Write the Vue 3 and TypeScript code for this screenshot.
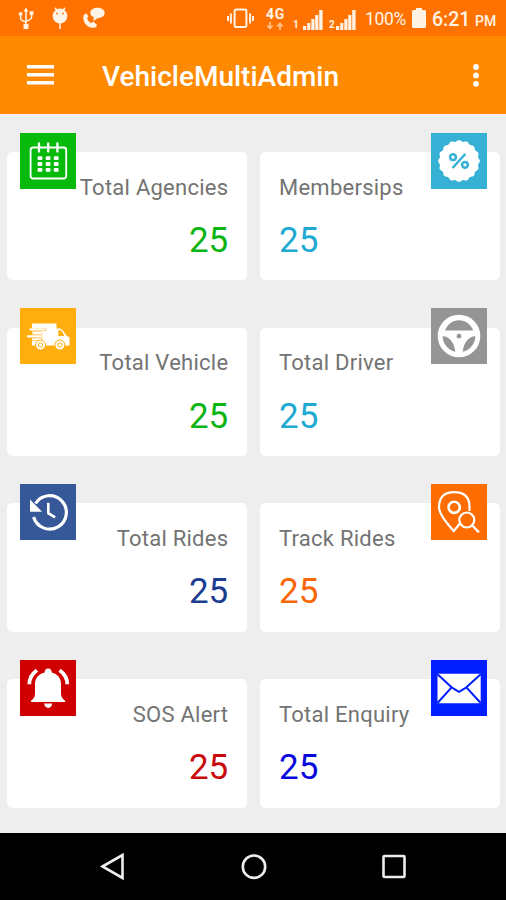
<script setup lang="ts">
type IconName = 'calendar' | 'percent' | 'truck' | 'wheel' | 'history' | 'track' | 'bell' | 'mail'

interface Tile {
  label: string
  value: number
  icon: IconName
  tone: string
}

const tiles: Tile[] = [
  { label: 'Total Agencies', value: 25, icon: 'calendar', tone: 'green' },
  { label: 'Membersips', value: 25, icon: 'percent', tone: 'cyan' },
  { label: 'Total Vehicle', value: 25, icon: 'truck', tone: 'amber' },
  { label: 'Total Driver', value: 25, icon: 'wheel', tone: 'grey' },
  { label: 'Total Rides', value: 25, icon: 'history', tone: 'navy' },
  { label: 'Track Rides', value: 25, icon: 'track', tone: 'orange' },
  { label: 'SOS Alert', value: 25, icon: 'bell', tone: 'red' },
  { label: 'Total Enquiry', value: 25, icon: 'mail', tone: 'blue' },
]

const calendarDots = [0, 1, 2].flatMap((row) =>
  [0, 1, 2].map((col) => ({ x: 17.6 + col * 8.1, y: 23.2 + row * 5.9 })),
)

// Scalloped outline of the discount seal
const sealPoints = Array.from({ length: 96 }, (_, i) => {
  const a = (i / 96) * Math.PI * 2
  const r = 20.2 + 0.8 * Math.cos(a * 16)
  return `${(28 + r * Math.sin(a)).toFixed(2)},${(28 - r * Math.cos(a)).toFixed(2)}`
}).join(' ')
</script>

<template>
  <div class="screen">
    <header class="status">
      <div class="notices">
        <svg class="usb" viewBox="0 0 16 23" fill="none" stroke="currentColor" stroke-width="1.5">
          <path d="M8 3v16M2.6 7v4.2q0 2 2 2.5L8 15M13.6 6.500v3.700q0 2-2 2.700L8 14.200" />
          <path d="M8 .5l2.400 4H5.600zM5.500 17h5v5h-5z" fill="currentColor" stroke="none" />
          <circle cx="2.600" cy="6.800" r="1.900" fill="currentColor" stroke="none" />
          <path d="M11.700 4.200h3.700v3.700h-3.700z" fill="currentColor" stroke="none" />
        </svg>
        <svg class="droid" viewBox="0 0 16 23">
          <path d="M3 .8l2 2.600M13 .8l-2 2.600M8 15v7" stroke="currentColor" stroke-width="1.500" />
          <circle cx="8" cy="9" r="7.400" fill="currentColor" />
          <circle cx="5" cy="6.500" r=".9" fill="#ff7200" />
          <circle cx="11" cy="6.500" r=".9" fill="#ff7200" />
        </svg>
        <svg class="call" viewBox="0 0 24 22" fill="currentColor">
          <path d="M1.500 8.200C0 17 7.500 22.500 14.200 20.300l.8-2.600-3.600-3-2.700 1.400Q6 14.500 5.100 11.200l1.300-2L4.300 6.300z" />
          <path d="M15.500.8c4 0 7.200 2.200 7.200 5.200s-3.200 5.200-7.200 5.200l-4.300 3 .6-3.900C9.700 9.300 8.300 7.900 8.300 6c0-3 3.200-5.200 7.200-5.200z" />
        </svg>
      </div>
      <svg class="vibrate" viewBox="0 0 27 22" fill="none" stroke="currentColor">
        <rect x="7.600" y="2.500" width="11.800" height="17.500" rx="1.500" stroke-width="2" />
        <path d="M1 9v5M3.900 6.500v10M26 9v5M23.100 6.500v10" stroke-width="2" />
      </svg>
      <div class="network">
        <span>4G</span>
        <svg viewBox="0 0 18 8" fill="none" stroke="currentColor" stroke-width="1.800">
          <path d="M4 0v6M1.300 3.500L4 6.500l2.700-3M14 8V2M11.300 4.500L14 1.500l2.700 3" />
        </svg>
      </div>
      <div v-for="sim in [1, 2]" :key="sim" class="signal">
        <span>{{ sim }}</span>
        <svg viewBox="0 0 20 20" fill="currentColor">
          <path d="M0 16h3.200v4H0zM4.200 13h3.200v7h-3.200zM8.300 9h3.200v11h-3.200zM12.200 5h3.200v15h-3.200zM16.200 0H19.600v20H16.200z" />
        </svg>
      </div>
      <span class="charge">100%</span>
      <svg class="battery" viewBox="0 0 14 21" fill="currentColor">
        <path d="M4 0h6v2h2.500q1.500 0 1.500 1.500v15q0 1.500-1.500 1.500h-11Q0 20 0 18.500v-15Q0 2 1.500 2H4z" />
      </svg>
      <span class="clock">6:21</span>
      <span class="meridiem">PM</span>
    </header>

    <div class="appbar">
      <svg class="menu" viewBox="0 0 27 20" fill="currentColor">
        <path d="M0 0h27v3.500H0zM0 8h27v3.500H0zM0 16h27v3.500H0z" />
      </svg>
      <h1>VehicleMultiAdmin</h1>
      <svg class="more" viewBox="0 0 6 23" fill="currentColor">
        <circle cx="3" cy="3" r="2.900" /><circle cx="3" cy="11.400" r="2.900" /><circle cx="3" cy="19.800" r="2.900" />
      </svg>
    </div>

    <main class="grid">
      <section v-for="tile in tiles" :key="tile.label" class="card" :class="tile.tone">
        <div class="badge">
          <svg viewBox="0 0 56 56" fill="none" stroke="#fff">
            <template v-if="tile.icon === 'calendar'">
              <rect x="10.600" y="14.500" width="35.600" height="31" rx="2.500" stroke-width="1.800" />
              <path d="M19 10.500v8M28.200 10.500v8M37.400 10.500v8" stroke-width="2.300" stroke-linecap="round" />
              <rect v-for="(dot, i) in calendarDots" :key="i" :x="dot.x" :y="dot.y" width="4.800" height="3.800" rx=".8" fill="#fff" stroke="none" />
            </template>
            <template v-else-if="tile.icon === 'percent'">
              <polygon :points="sealPoints" fill="#fff" stroke="none" />
              <g stroke="#36b0d5" stroke-width="2.500">
                <circle cx="22" cy="24.200" r="2.900" />
                <circle cx="34" cy="31.800" r="2.900" />
                <path d="M34.300 21L21.500 35" />
              </g>
            </template>
            <template v-else-if="tile.icon === 'truck'">
              <path d="M13 15.500h23.500V20.500h3.500q2 0 4 3.500l2.300 3.500 3.200 2v8H12V15.500z" fill="#fff" stroke="none" />
              <path d="M38.300 22.300v5.700h6q-2.300-5.700-4.300-5.700z" fill="#ffae0d" stroke="none" />
              <path d="M10 21.500h15M13 25h8M8 28.500h13M12 31.500h9" stroke="#ffae0d" stroke-width="3.200" stroke-linecap="round" />
              <path d="M10.500 21.300H25M13.500 24.800h8M8 28.300h13.500M13 31.300h8" stroke-width="2.200" stroke-linecap="round" />
              <g fill="#fff" stroke="#ffae0d" stroke-width="1">
                <circle cx="20.500" cy="37" r="5" /><circle cx="39.800" cy="37" r="5" />
                <circle cx="20.500" cy="37" r="2.100" /><circle cx="39.800" cy="37" r="2.100" />
              </g>
            </template>
            <template v-else-if="tile.icon === 'wheel'">
              <circle cx="28" cy="28" r="21.300" fill="#fff" stroke="none" />
              <g fill="#959595" stroke="none">
                <path d="M14 22.600C16.500 16 21.500 12.300 28 12.300S39.500 16 42.300 22.600z" />
                <path d="M11.600 28.200C17 28 23.500 33.500 24.300 43.700C17 42 12 36 11.600 28.200z" />
                <path d="M44.400 28.200C39 28 32.500 33.500 31.700 43.700C39 42 44 36 44.400 28.200z" />
                <circle cx="28" cy="28.200" r="2.400" />
              </g>
            </template>
            <template v-else-if="tile.icon === 'history'">
              <path d="M15.500 19.500A16.700 16.700 0 1 1 13.600 33" stroke-width="3.200" />
              <path d="M10 15.500v12.200h12z" fill="#fff" stroke="none" />
              <path d="M28.300 18.800v10.400l6.800 4.200" stroke-width="2.600" />
            </template>
            <template v-else-if="tile.icon === 'track'">
              <path d="M38.500 27V23Q38.500 8.200 23.200 8.200T8 23.500Q8.500 31.500 22.800 47L29 39.500" stroke-width="2.200" />
              <circle cx="23.200" cy="23.300" r="5.600" stroke-width="2.600" />
              <circle cx="35.800" cy="36" r="7.500" stroke-width="2.200" />
              <path d="M41.300 41.500l6.700 6.800" stroke-width="2.400" />
            </template>
            <template v-else-if="tile.icon === 'bell'">
              <path d="M11 42v-1.200q4-2.800 4-7V24c0-6 3.800-10 9.600-11.500C24.800 10 25.800 8.500 28.200 8.500s3.400 1.500 3.600 4C37.600 14 41 18 41 24v9.800q0 4.200 4.200 7V42z" fill="#fff" stroke="none" />
              <path d="M24.200 43.600h8q-.6 4.300-4 4.300t-4-4.300z" fill="#fff" stroke="none" />
              <path d="M9.300 24.300Q9.500 15.500 17 10.300M47.300 24.300Q47.100 15.500 39.600 10.300" stroke-width="3.800" />
            </template>
            <template v-else>
              <path d="M6.500 13.700h43.200v29.600H6.500z" fill="#fff" stroke="none" />
              <path d="M6.500 14.200L20.600 27.300L28 31.900L35.400 27.300L49.700 14.200M20.600 27.300L6.500 43M35.400 27.300L49.700 43" stroke="#001eff" stroke-width="2" stroke-linejoin="round" />
            </template>
          </svg>
        </div>
        <span class="label">{{ tile.label }}</span>
        <strong class="value">{{ tile.value }}</strong>
      </section>
    </main>

    <nav class="navbar">
      <svg viewBox="0 0 28 28"><path d="M3.500 13.500L23.500 2v23z" /></svg>
      <svg viewBox="0 0 28 28"><circle cx="14" cy="13.700" r="11.200" /></svg>
      <svg viewBox="0 0 28 28"><rect x="3.500" y="3" width="21" height="21" rx="1" /></svg>
    </nav>
  </div>
</template>

<style>
body {
  margin: 0;
}
</style>

<style scoped>
.screen {
  display: flex;
  flex-direction: column;
  height: 900px;
  overflow: hidden;
  background: #eee;
  color: #fff;
  font-family: Roboto, sans-serif;
}
.screen svg {
  display: block;
  flex: none;
}
.status {
  display: flex;
  box-sizing: border-box;
  height: 36px;
  flex: none;
  padding: 7px 9px 0 18px;
  background: #ff7200;
  color: #fff3e6;
  line-height: 1;
}
.notices {
  display: flex;
  width: 209px;
}
.usb, .droid {
  width: 16px;
  height: 23px;
}
.droid {
  margin-left: 18px;
}
.call {
  width: 24px;
  height: 22px;
  margin-left: 14px;
}
.vibrate {
  width: 27px;
  height: 22px;
}
.network {
  display: flex;
  flex-direction: column;
  width: 20px;
  margin-left: 12px;
  font-size: 14px;
  font-weight: 700;
}
.network span {
  height: 15px;
  letter-spacing: 0.8px;
}
.network svg {
  width: 18px;
  height: 8px;
  opacity: 0.6;
}
.signal {
  display: flex;
  align-items: flex-end;
  justify-content: space-between;
  width: 30px;
  height: 23px;
  margin-left: 7px;
  font-size: 10px;
  font-weight: 700;
}
.signal + .signal {
  width: 27px;
  margin-left: 6px;
}
.signal svg {
  width: 20px;
  height: 20px;
}
.charge {
  width: 40px;
  padding-top: 4px;
  margin-left: 9px;
  font-size: 17.5px;
  letter-spacing: -0.300px;
}
.battery {
  width: 14px;
  height: 21px;
  margin: 1px 0 0 7px;
}
.clock {
  width: 38px;
  padding-top: 3px;
  margin-left: 6px;
  font-size: 19.500px;
  font-weight: 500;
}
.meridiem {
  padding-top: 7px;
  margin-left: 5px;
  font-size: 14px;
  font-weight: 500;
}
.appbar {
  display: flex;
  align-items: center;
  box-sizing: border-box;
  height: 78px;
  flex: none;
  padding: 0 27px;
  background: #ff8a00;
}
.menu {
  width: 27px;
  height: 20px;
}
h1 {
  flex: 1;
  margin: 4px 0 0 48px;
  font-size: 28px;
  font-weight: 500;
  line-height: 32px;
}
.more {
  width: 6px;
  height: 23px;
}
.grid {
  display: grid;
  flex: 1;
  grid-template-columns: 239.500px 239.500px;
  grid-auto-rows: 128.400px;
  gap: 47.350px 13.700px;
  align-content: start;
  padding: 38px 7px 0 7.300px;
}
.card {
  position: relative;
  display: flex;
  flex-direction: column;
  box-sizing: border-box;
  padding: 22.600px 18.500px 0;
  border-radius: 5px;
  background: #fff;
}
.card:nth-child(odd) {
  align-items: flex-end;
}
.badge {
  position: absolute;
  top: -19.300px;
  left: 13px;
  width: 56px;
  height: 56px;
  background: var(--badge);
}
.card:nth-child(even) .badge {
  right: 13px;
  left: auto;
}
.label {
  color: #737373;
  font-size: 22px;
  line-height: 26px;
  letter-spacing: 0.250px;
  white-space: nowrap;
}
.value {
  margin-top: 20.400px;
  color: var(--value);
  font-size: 35px;
  font-weight: 400;
  line-height: 40px;
}
.green { --badge: #07ba0c; --value: #0db414; }
.cyan { --badge: #36b0d5; --value: #20aad2; }
.amber { --badge: #ffae0d; --value: #0db414; }
.grey { --badge: #959595; --value: #20aad2; }
.navy { --badge: #365899; --value: #1c3c90; }
.orange { --badge: #ff6d00; --value: #f96705; }
.red { --badge: #d10000; --value: #c90a0a; }
.blue { --badge: #001eff; --value: #0808dc; }
.navbar {
  display: flex;
  align-items: center;
  justify-content: space-between;
  box-sizing: border-box;
  height: 67px;
  flex: none;
  padding: 0 98px 0 99px;
  background: #000;
}
.navbar svg {
  width: 28px;
  height: 28px;
  fill: none;
  stroke: #eee;
  stroke-width: 2.600;
}
</style>
